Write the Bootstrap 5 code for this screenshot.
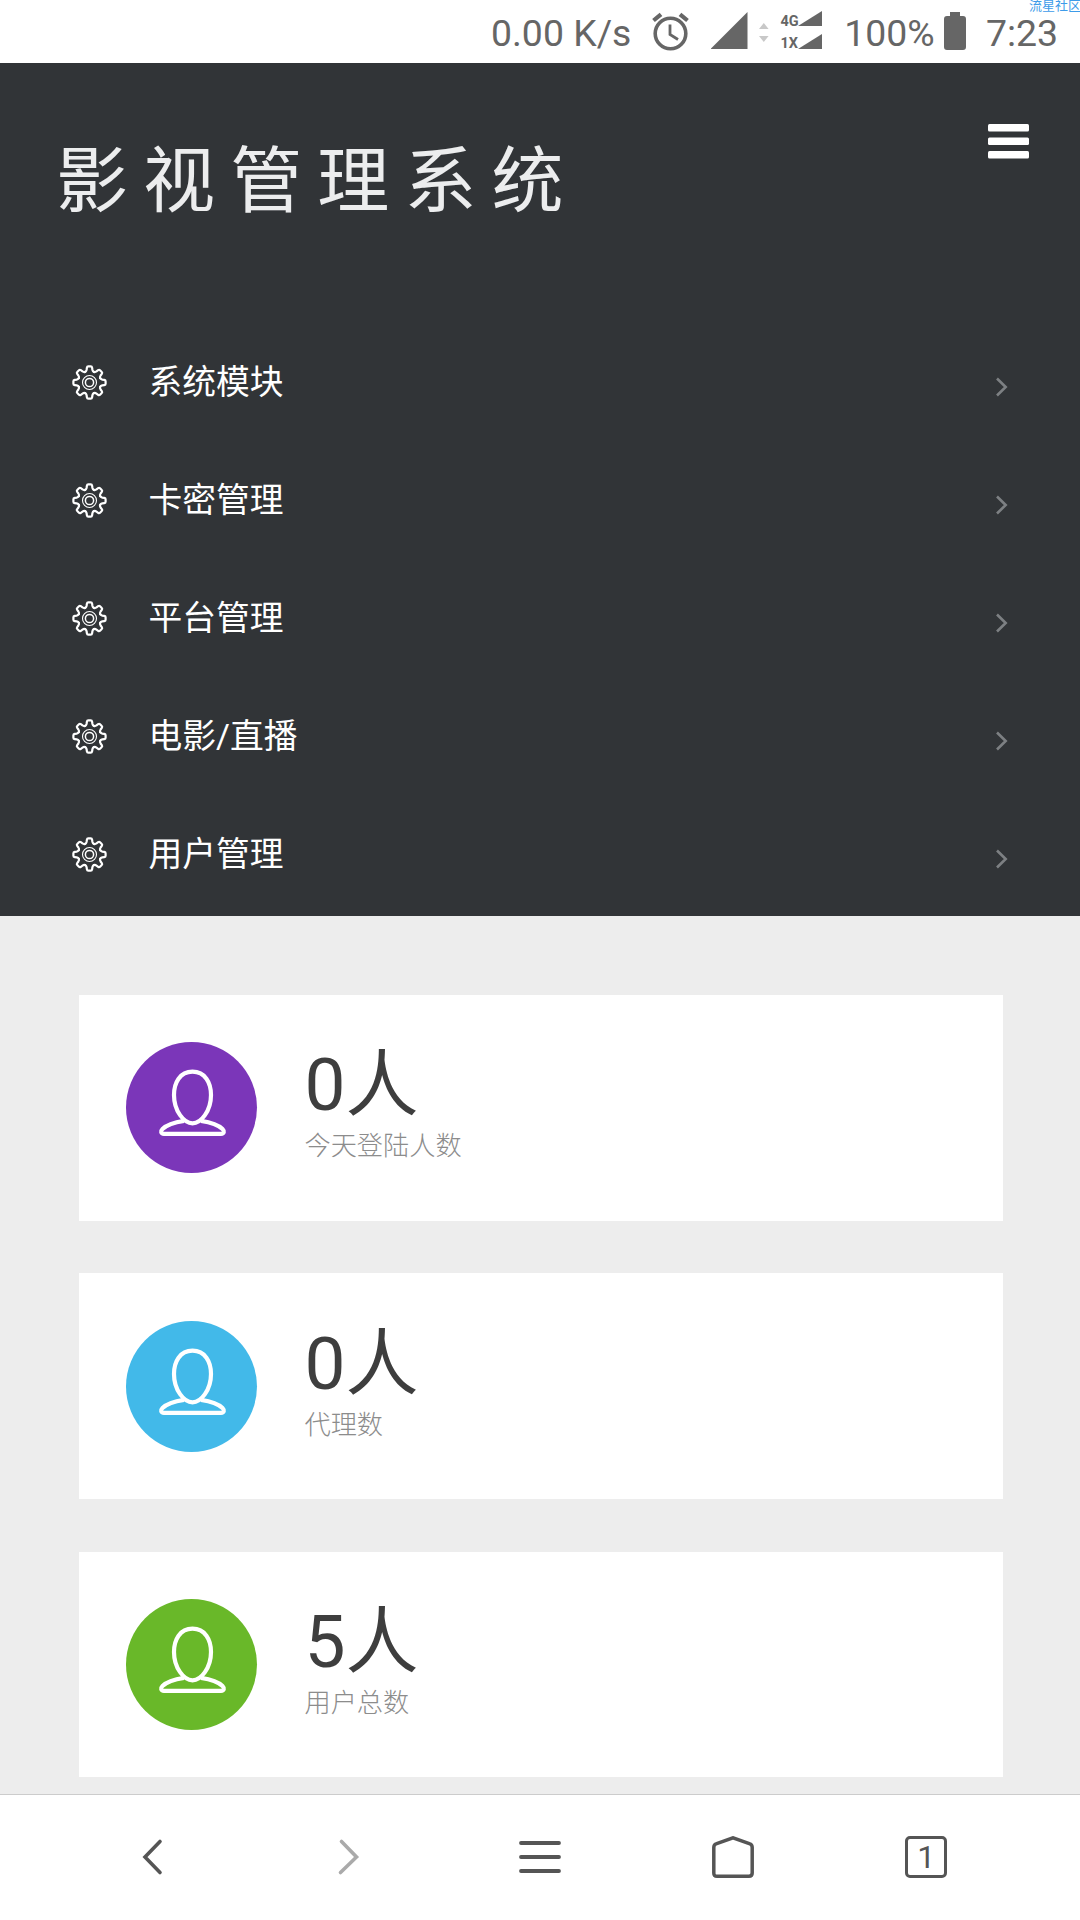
<!DOCTYPE html>
<html lang="zh-CN">
<head>
<meta charset="utf-8">
<meta name="viewport" content="width=device-width, initial-scale=1">
<title>影视管理系统</title>
<link href="https://cdn.jsdelivr.net/npm/bootstrap@5.3.0/dist/css/bootstrap.min.css" rel="stylesheet">
<style>
body{font-family:Roboto,"Noto Sans CJK SC",sans-serif;background:#ededed;width:1080px;height:1920px;overflow:hidden}
svg{display:block;flex:none}
.status-bar{height:63px;background:#fff;color:#666;font-size:37.4px;line-height:60px;padding:3px 22px 0 491px}
.net-speed{width:161px;white-space:nowrap}
.sim-type{font:700 14.5px/22px Roboto,sans-serif;width:18px}
.sim-list{width:64px;padding-top:8px}
.battery-level{width:100px;white-space:nowrap}
.clock-text{line-height:36px}
.watermark{top:-2px;left:1029px;font-size:13px;line-height:16px;color:#3d9be9;white-space:nowrap}
.side-panel{height:853px;background:#313437;color:#fff}
.panel-head{height:260px;padding:75px 51px 0 56px}
.brand-name{font-size:72px;line-height:88px;letter-spacing:15.1px;color:#ecedee;font-weight:400;white-space:nowrap}
.toggle-icon{margin-top:-14px}
.menu-row{height:118px;padding:0 71px 0 72px;color:#fff;font-size:33.75px;line-height:50px}
.menu-row .menu-text{margin:2px 0 0 41.5px}
.menu-row .arrow{margin-top:9px}
.stat-list{height:878px;padding:79px 77.5px 0 79px}
.stat-card{height:225.5px;margin-bottom:52.9px;padding:0 47px;background:#fff}
.stat-icon{width:131px;height:131px}
.stat-body{margin:-9px 0 0 47.5px}
.stat-num{font-size:73px;line-height:86px;color:#3e3e3e}
.stat-label{font-size:26.2px;line-height:36px;color:#8c8c8c;font-weight:300}
.bottom-bar{height:126px;background:#fff;border-top:1px solid #ccc;padding:0 57px 2px 57px}
.tab-cell{width:193.2px;color:#555}
.tab-cell:first-child{padding-right:4px}
.tab-cell:nth-child(2){padding-left:4px}
.tab-count{width:42px;height:42px;border:3px solid #555;border-radius:5px;font-size:32px;line-height:37px}
</style>
</head>
<body class="d-flex flex-column">
<svg width="0" height="0" class="position-absolute" aria-hidden="true">
  <defs>
    <path id="tooth" d="M-4.4-10.6Q-3.2-11.2-2.9-12.8L-2.6-14.8Q-2.4-16.1-1.2-16.1H1.2Q2.4-16.1 2.6-14.8L2.9-12.8Q3.2-11.2 4.4-10.6"/>
    <symbol id="gear" viewBox="-17.5 -17.5 35 35">
      <g fill="none" stroke="#fff" stroke-width="2.2" stroke-linecap="round">
        <use href="#tooth"/><use href="#tooth" transform="rotate(45)"/><use href="#tooth" transform="rotate(90)"/><use href="#tooth" transform="rotate(135)"/><use href="#tooth" transform="rotate(180)"/><use href="#tooth" transform="rotate(225)"/><use href="#tooth" transform="rotate(270)"/><use href="#tooth" transform="rotate(315)"/>
        <circle r="7" stroke-width="1.1"/><circle r="4.1" stroke-width="1.5"/>
      </g>
    </symbol>
    <symbol id="chev" viewBox="0 0 14 22"><path d="M2 2.500l8.700 8.500L2 19.500" fill="none" stroke="#7d8083" stroke-width="2.6"/></symbol>
    <symbol id="person" viewBox="0 0 131 131">
      <g fill="none" stroke="#fff" stroke-width="4.2" stroke-linejoin="round">
        <path d="M66.5 29.7C54 29.7 48 40.5 48 53C48 69 58 81.3 66.5 81.3S85 69 85 53C85 40.5 79 29.7 66.5 29.7Z"/>
        <path d="M58 78.8C48 80.3 39.5 84 36.5 87C34.3 89.2 34.8 91.8 38 91.8H95C98.2 91.8 98.7 89.2 96.5 87C93.5 84 85 80.3 75 78.8"/>
      </g>
    </symbol>
  </defs>
</svg>

<header class="status-bar d-flex align-items-center flex-shrink-0 position-relative">
  <span class="net-speed">0.00 K/s</span>
  <svg width="60" height="60" viewBox="652 3 60 60" fill="none" stroke="#666"><circle cx="671.5" cy="33.500" r="15.3" stroke-width="3.6"/><path d="M671 24.500v10l8 5" stroke-width="2.8"/><path d="M654.5 20.500l7.500-6.200M688.500 20.500l-7.500-6.200" stroke-width="4.200"/></svg>
  <svg width="69" height="60" viewBox="712 3 69 60"><path fill="#666" d="M748.500 12v37h-37z"/><path fill="#c8c8c8" d="M760 29l4.800-6 4.800 6zM760 36l4.800 6 4.800-6z"/></svg>
  <div class="sim-list d-flex flex-column align-self-start">
    <div class="d-flex"><span class="sim-type">4G</span><svg width="26" height="22" viewBox="0 0 26 22"><path fill="#666" d="M24 0v15H0z"/></svg></div>
    <div class="d-flex"><span class="sim-type">1X</span><svg width="26" height="22" viewBox="0 0 26 22"><path fill="#666" d="M24 1v15H0z"/></svg></div>
  </div>
  <span class="battery-level">100%</span>
  <svg width="42" height="60" viewBox="945 3 42 60"><path fill="#666" d="M951 12h10v4h3q3 0 3 3v28q0 3-3 3h-16q-3 0-3-3V19q0-3 3-3h3z"/></svg>
  <span class="clock-text">7:23</span>
  <span class="watermark position-absolute">流星社区</span>
</header>

<nav class="side-panel flex-shrink-0">
  <div class="panel-head d-flex justify-content-between align-items-start">
    <h1 class="brand-name m-0">影视管理系统</h1>
    <svg class="toggle-icon" width="41" height="36" viewBox="0 0 41 36" fill="#fff"><rect y="0" width="41" height="7.500" rx="1.500"/><rect y="13.500" width="41" height="7.500" rx="1.500"/><rect y="27" width="41" height="7.500" rx="1.500"/></svg>
  </div>
  <div class="menu-row d-flex align-items-center"><svg width="35" height="35"><use href="#gear"/></svg><span class="menu-text">系统模块</span><svg class="arrow ms-auto" width="14" height="22"><use href="#chev"/></svg></div>
  <div class="menu-row d-flex align-items-center"><svg width="35" height="35"><use href="#gear"/></svg><span class="menu-text">卡密管理</span><svg class="arrow ms-auto" width="14" height="22"><use href="#chev"/></svg></div>
  <div class="menu-row d-flex align-items-center"><svg width="35" height="35"><use href="#gear"/></svg><span class="menu-text">平台管理</span><svg class="arrow ms-auto" width="14" height="22"><use href="#chev"/></svg></div>
  <div class="menu-row d-flex align-items-center"><svg width="35" height="35"><use href="#gear"/></svg><span class="menu-text">电影/直播</span><svg class="arrow ms-auto" width="14" height="22"><use href="#chev"/></svg></div>
  <div class="menu-row d-flex align-items-center"><svg width="35" height="35"><use href="#gear"/></svg><span class="menu-text">用户管理</span><svg class="arrow ms-auto" width="14" height="22"><use href="#chev"/></svg></div>
</nav>

<main class="stat-list flex-shrink-0">
  <section class="stat-card d-flex align-items-center">
    <div class="stat-icon rounded-circle" style="background:#7b36b9"><svg width="131" height="131"><use href="#person"/></svg></div>
    <div class="stat-body"><div class="stat-num">0人</div><div class="stat-label">今天登陆人数</div></div>
  </section>
  <section class="stat-card d-flex align-items-center">
    <div class="stat-icon rounded-circle" style="background:#42b9e9"><svg width="131" height="131"><use href="#person"/></svg></div>
    <div class="stat-body"><div class="stat-num">0人</div><div class="stat-label">代理数</div></div>
  </section>
  <section class="stat-card d-flex align-items-center">
    <div class="stat-icon rounded-circle" style="background:#69b829"><svg width="131" height="131"><use href="#person"/></svg></div>
    <div class="stat-body"><div class="stat-num">5人</div><div class="stat-label">用户总数</div></div>
  </section>
</main>

<footer class="bottom-bar d-flex align-items-center flex-shrink-0">
  <div class="tab-cell d-flex justify-content-center"><svg width="24" height="40" viewBox="0 0 24 40"><path d="M20 4.500L5 20l15 15.500" fill="none" stroke="#555" stroke-width="3.600" stroke-linecap="round"/></svg></div>
  <div class="tab-cell d-flex justify-content-center"><svg width="24" height="40" viewBox="0 0 24 40"><path d="M4.500 4.500L19.500 20l-16 15.500" fill="none" stroke="#aaa" stroke-width="3.600" stroke-linecap="round"/></svg></div>
  <div class="tab-cell d-flex justify-content-center"><svg width="42" height="36" viewBox="0 0 42 36"><path d="M2 4h38M2 18h38M2 32h38" stroke="#555" stroke-width="3.800" stroke-linecap="round"/></svg></div>
  <div class="tab-cell d-flex justify-content-center"><svg width="42" height="42" viewBox="0 0 42 42"><path d="M1.800 11.500Q1.800 8.500 4 7.800L21 1.800 38 7.800Q40.200 8.500 40.200 11.500V37Q40.200 40.200 37 40.200H5Q1.800 40.200 1.800 37Z" fill="none" stroke="#555" stroke-width="3.500"/></svg></div>
  <div class="tab-cell d-flex justify-content-center"><div class="tab-count text-center">1</div></div>
</footer>
<script src="https://cdn.jsdelivr.net/npm/bootstrap@5.3.0/dist/js/bootstrap.bundle.min.js"></script>
</body>
</html>
